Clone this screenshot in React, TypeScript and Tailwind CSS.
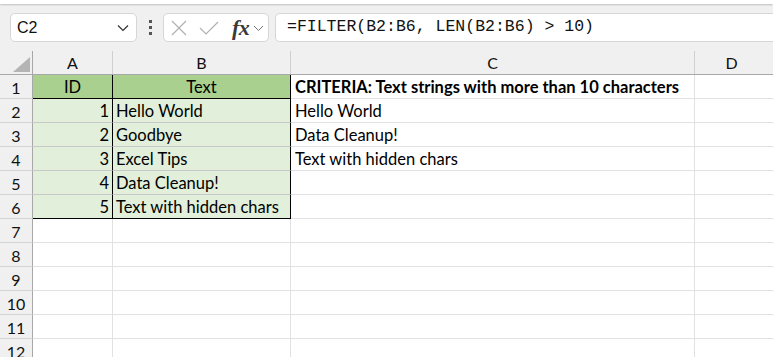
import React from "react";

const cellFont = { fontFamily: "Lato, 'Noto Sans', sans-serif" };

const rows: { n: number; a?: string; b?: string; c?: string }[] = [
  { n: 1, a: "ID", b: "Text", c: "CRITERIA: Text strings with more than 10 characters" },
  { n: 2, a: "1", b: "Hello World", c: "Hello World" },
  { n: 3, a: "2", b: "Goodbye", c: "Data Cleanup!" },
  { n: 4, a: "3", b: "Excel Tips", c: "Text with hidden chars" },
  { n: 5, a: "4", b: "Data Cleanup!" },
  { n: 6, a: "5", b: "Text with hidden chars" },
  { n: 7 },
  { n: 8 },
  { n: 9 },
  { n: 10 },
  { n: 11 },
  { n: 12 },
];

function Chevron() {
  return (
    <svg width="12" height="8" viewBox="0 0 12 8" fill="none">
      <path d="M1 1.5 L6 6.5 L11 1.5" stroke="#333" strokeWidth="1.2" />
    </svg>
  );
}

export default function App() {
  return (
    <div className="w-[773px] h-[357px] overflow-hidden bg-white relative" style={{ fontFamily: "'Noto Sans', sans-serif" }}>
      {/* top white strip with shadow */}
      <div className="h-[4px] bg-white shadow-[0_1px_2px_rgba(0,0,0,0.2)] relative z-10" />
      {/* toolbar */}
      <div className="h-[47px] bg-[#f0f0f0] flex items-start pt-[9px]">
        <div className="ml-[10px] w-[127px] h-[29px] bg-white border border-[#d6d6d6] rounded-[5px] flex items-center justify-between pl-[6px] pr-[7px]">
          <span className="text-[16px] text-[#111]" style={{ fontFamily: "'Liberation Sans', sans-serif" }}>C2</span>
          <Chevron />
        </div>
        <div className="w-[26px] h-[29px] flex flex-col items-center justify-center gap-[3px]">
          <div className="w-[3px] h-[3px] bg-[#555]" />
          <div className="w-[3px] h-[3px] bg-[#555]" />
          <div className="w-[3px] h-[3px] bg-[#555]" />
        </div>
        <div className="w-[106px] h-[29px] bg-white border border-[#d6d6d6] rounded-[5px] flex items-center pl-[7px]">
          <svg width="16" height="16" viewBox="0 0 16 16" fill="none">
            <path d="M1 1 L15 15 M15 1 L1 15" stroke="#b0b0b0" strokeWidth="1.2" />
          </svg>
          <svg width="20" height="16" viewBox="0 0 20 16" fill="none" className="ml-[12px]">
            <path d="M1 8 L7 14 L19 2" stroke="#b0b0b0" strokeWidth="1.2" />
          </svg>
          <span className="ml-[13px] text-[22px] italic font-bold text-[#3a3a3a] leading-none tracking-[-0.5px]" style={{ fontFamily: "'Liberation Serif', serif" }}>fx</span>
          <span className="ml-[4px] mt-[2px]">
            <svg width="11" height="7" viewBox="0 0 11 7" fill="none">
              <path d="M1 1 L5.5 5.5 L10 1" stroke="#777" strokeWidth="1" />
            </svg>
          </span>
        </div>
        <div className="ml-[6px] flex-1 h-[29px] bg-white border-y border-l border-[#d6d6d6] rounded-l-[5px] flex items-center pl-[11px]">
          <span className="text-[16.5px] text-[#111] whitespace-pre" style={{ fontFamily: "'Liberation Mono', monospace" }}>=FILTER(B2:B6, LEN(B2:B6) &gt; 10)</span>
        </div>
      </div>
      {/* grid */}
      <div className="flex flex-col" style={cellFont}>
        {/* column header */}
        <div className="flex h-[24px] bg-[#f0f0f0] border-b border-[#a8a8a8] text-[16px] text-[#111]">
          <div className="w-[33px] border-r border-[#a8a8a8] relative">
            <svg width="17" height="15" viewBox="0 0 17 15" className="absolute left-[13px] top-[6px]">
              <path d="M17 0 L17 15 L0 15 Z" fill="#b4b4b4" />
            </svg>
          </div>
          <div className="w-[80px] border-r border-[#d0d0d0] flex items-center justify-center pt-[1px]">A</div>
          <div className="w-[178px] border-r border-[#d0d0d0] flex items-center justify-center pt-[1px]">B</div>
          <div className="w-[404px] border-r border-[#d0d0d0] flex items-center justify-center pt-[1px]">C</div>
          <div className="flex-1 flex items-center justify-center pr-[5px] pt-[1px]">D</div>
        </div>
        {rows.map((r) => {
          const inTable = r.n <= 6;
          const head = r.n === 1;
          const bg = head ? "bg-[#a9d08e]" : inTable ? "bg-[#e2efda]" : "bg-white";
          const bottom = inTable ? (r.n === 1 || r.n === 6 ? "border-black" : "border-[#c8c8c8]") : "border-[#e1e1e1]";
          return (
            <div key={r.n} className="flex h-[24px] text-[16.5px] text-black">
              <div className="w-[33px] bg-[#f0f0f0] border-r border-b border-r-[#a8a8a8] border-b-[#d4d4d4] flex items-center justify-center pt-[2px] text-[16px] text-[#111]">
                {r.n}
              </div>
              <div className={`w-[80px] border-b ${bottom} ${bg} ${inTable ? "border-r border-r-black" : "border-r border-r-[#e1e1e1]"} flex items-center pt-[2px] ${head ? "justify-center" : "justify-end pr-[3px]"}`}>
                {r.a}
              </div>
              <div className={`w-[178px] border-b ${bottom} ${bg} ${inTable ? "border-r border-r-black" : "border-r border-r-[#e1e1e1]"} flex items-center pt-[2px] ${head ? "justify-center" : "pl-[3px]"} whitespace-nowrap`}>
                {r.b}
              </div>
              <div className={`w-[404px] border-b border-r border-[#e1e1e1] flex items-center pt-[2px] pl-[4px] whitespace-nowrap ${head ? "font-bold" : ""}`}>
                {r.c}
              </div>
              <div className="flex-1 border-b border-[#e1e1e1]" />
            </div>
          );
        })}
      </div>
    </div>
  );
}
